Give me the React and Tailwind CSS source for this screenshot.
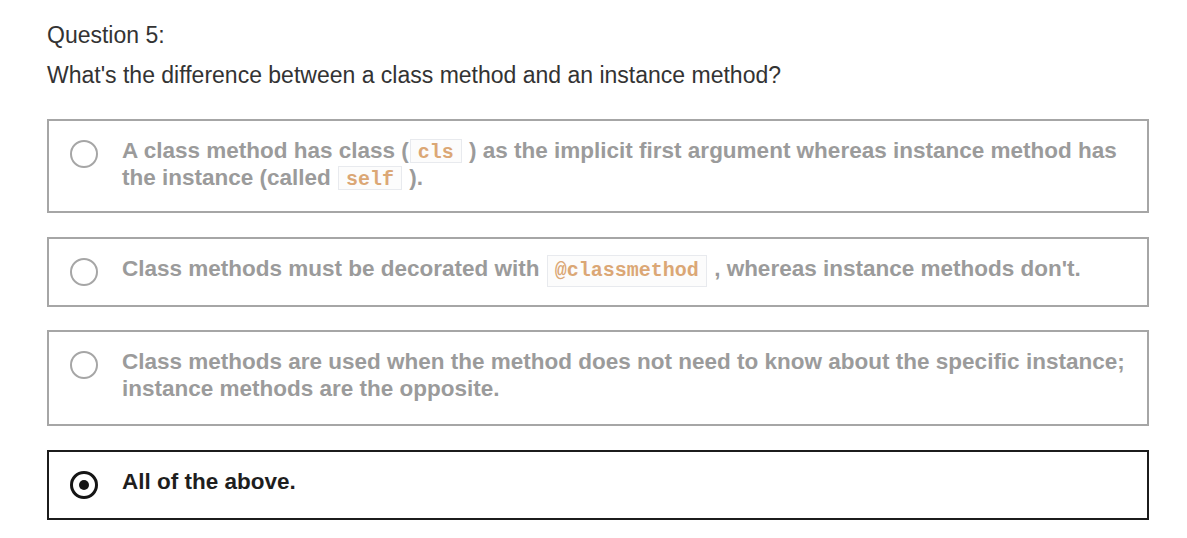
import React from "react";

const font = { fontFamily: '"Liberation Sans", Arial, sans-serif' };

function Code({ children, tall }) {
  return (
    <span
      className={
        tall
          ? "inline-block h-[32px] pt-[5px] -mb-[6px] leading-[20px] px-[7px] mx-[1px] border border-[#e8eaee] bg-[#fcfcfc] text-[#dba775] text-[20px] font-bold align-baseline"
          : "inline-block h-[24px] pt-[3px] leading-[20px] px-[7px] mx-[1px] border border-[#e8eaee] bg-[#fcfcfc] text-[#dba775] text-[20px] font-bold align-baseline"
      }
      style={{ fontFamily: '"Liberation Mono", "Courier New", monospace' }}
    >
      {children}
    </span>
  );
}

function Radio({ checked }) {
  if (checked) {
    return (
      <span className="mt-[3px] -mb-[4px] flex h-[28px] w-[28px] shrink-0 items-center justify-center rounded-full border-[3px] border-[#151515]">
        <span className="h-[10px] w-[10px] rounded-full bg-[#151515]" />
      </span>
    );
  }
  return (
    <span className="mt-[3px] -mb-[4px] block h-[28px] w-[28px] shrink-0 rounded-full border-2 border-[#a6a6a6]" />
  );
}

function Option({ checked, extra, children }) {
  return (
    <div
      className={
        "flex w-[1102px] items-start gap-[24px] border-2 pl-[21px] pr-[14px] pt-[16px] " +
        extra +
        " " +
        (checked ? "border-[#1c1c1c]" : "border-[#a6a6a6]")
      }
    >
      <Radio checked={checked} />
      <div
        className={
          "text-[22.5px] font-bold leading-[27px] " +
          (checked ? "text-[#1e1e1e]" : "text-[#9b9b9b]")
        }
      >
        {children}
      </div>
    </div>
  );
}

export default function App() {
  return (
    <div className="min-h-[538px] w-[1187px] bg-white" style={font}>
      <div className="ml-[47px] pt-[22px]">
        <div className="text-[23px] leading-[26px] text-[#333]">Question 5:</div>
        <div className="mt-[14px] text-[23px] leading-[26px] text-[#333]">
          What's the difference between a class method and an instance method?
        </div>
        <div className="mt-[31px] flex flex-col">
          <Option extra="pb-[20px]">
            A class method has class (<Code>cls</Code> ) as the implicit first argument whereas
            instance method has the instance (called <Code>self</Code> ).
          </Option>
          <Option extra="mt-[24px] pb-[23px]">
            Class methods must be decorated with <Code tall>@classmethod</Code> , whereas
            instance methods don't.
          </Option>
          <Option extra="mt-[23px] pb-[22px]">
            Class methods are used when the method does not need to know about the specific
            instance; instance methods are the opposite.
          </Option>
          <Option checked extra="mt-[24px] pb-[23px]">
            All of the above.
          </Option>
        </div>
      </div>
    </div>
  );
}
